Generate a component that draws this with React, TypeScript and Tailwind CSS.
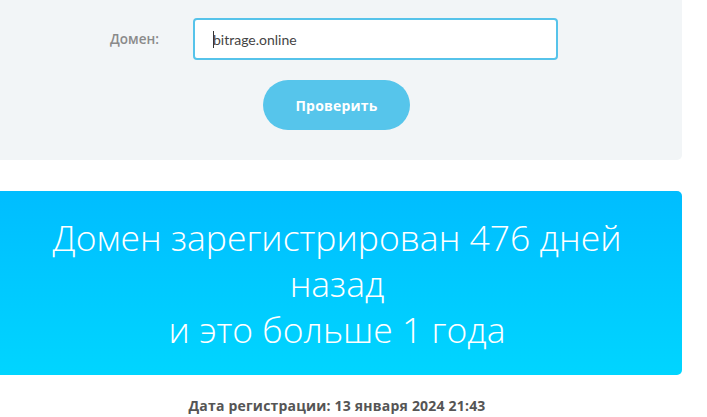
export default function App() {
  return (
    <div className="w-[707px] h-[417px] bg-white overflow-hidden font-['Open_Sans',sans-serif]">
      {/* search panel */}
      <div className="w-[682px] h-[160px] bg-[#f2f5f7] rounded-br-[5px] flex flex-col">
        <div className="flex items-center pt-[18px] pl-[110px]">
          <label className="w-[83px] text-[13.5px] font-semibold text-[#8a8a8a]">Домен:</label>
          <div className="w-[365px] h-[42px] bg-white border-2 border-[#56c3ea] rounded-[4px] flex items-center pl-[18px]">
            <span className="w-px h-[17px] bg-[#333] mr-[-1px]" />
            <span className="text-[14px] text-[#444] font-['Lato',sans-serif]">bitrage.online</span>
          </div>
        </div>
        <button className="ml-[263px] mt-[20px] w-[147px] h-[50px] rounded-full bg-[#56c5eb] text-white text-[14px] tracking-[0.2px] font-bold">
          Проверить
        </button>
      </div>

      {/* result banner */}
      <div className="mt-[31px] w-[682px] h-[184px] rounded-r-[5px] bg-gradient-to-b from-[#00bdff] to-[#00d5ff] pt-[23px] pr-[8px] text-center text-white text-[35.5px] leading-[46px] font-light">
        <div>Домен зарегистрирован 476 дней</div>
        <div>назад</div>
        <div>и это больше 1 года</div>
      </div>

      <div className="w-[674px] mt-[21px] text-center text-[14px] tracking-[0.2px] leading-[20px] font-bold text-[#555]">
        Дата регистрации: 13 января 2024 21:43
      </div>
    </div>
  );
}
